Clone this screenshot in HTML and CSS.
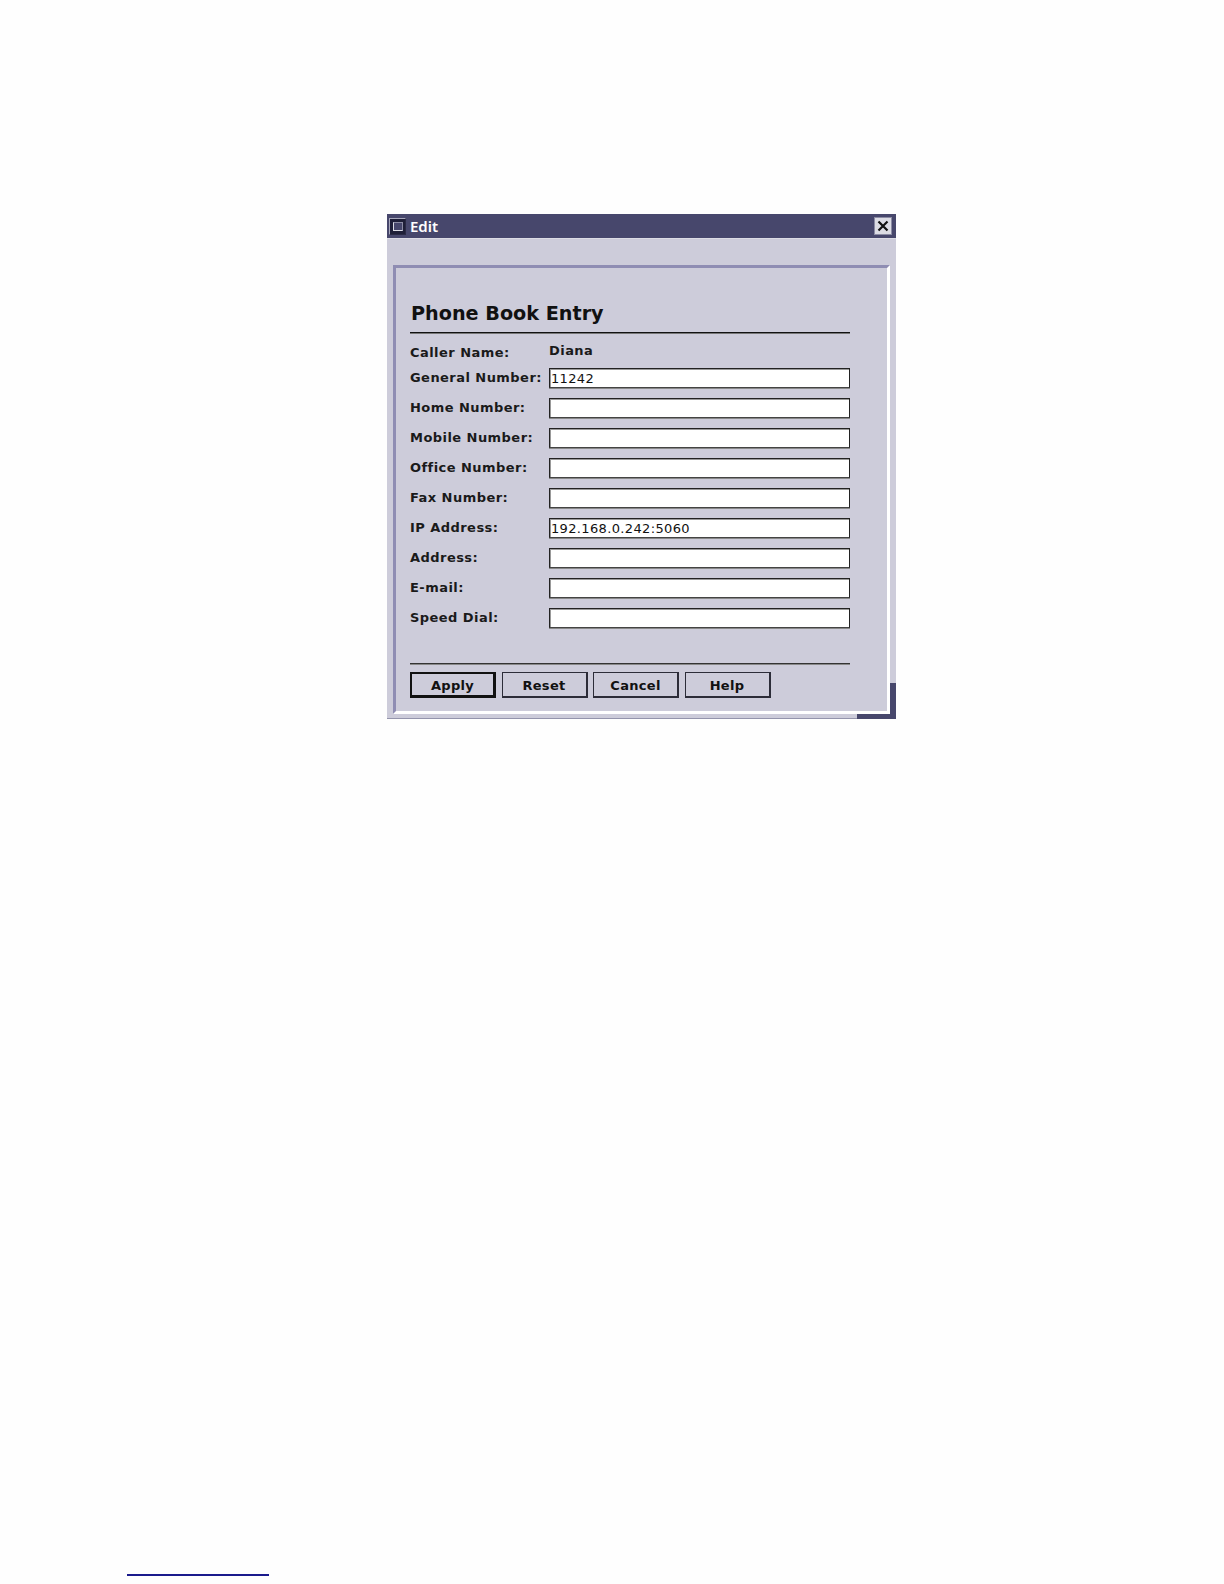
FILE: index.html
```html
<!DOCTYPE html>
<html lang="en">
<head>
    <meta charset="UTF-8">
    <title>Edit</title>
    <link rel="stylesheet" href="styles.css">
</head>
<body>
    <div class="window">
        <div class="title-bar">
            <span class="title-icon"><span></span></span>
            <span class="title-text">Edit</span>
            <span class="close-button">
                <svg width="12" height="12" viewBox="0 0 12 12"><path d="M1.5 1.5 L10.5 10.5 M10.5 1.5 L1.5 10.5" stroke="#111" stroke-width="2.2" fill="none"/></svg>
            </span>
        </div>

        <div class="panel">
            <h1>Phone Book Entry</h1>

            <div class="form-group caller">
                <label>Caller Name:</label>
                <span class="value">Diana</span>
            </div>
            <div class="form-group">
                <label>General Number:</label>
                <input type="text" value="11242">
            </div>
            <div class="form-group">
                <label>Home Number:</label>
                <input type="text">
            </div>
            <div class="form-group">
                <label>Mobile Number:</label>
                <input type="text">
            </div>
            <div class="form-group">
                <label>Office Number:</label>
                <input type="text">
            </div>
            <div class="form-group">
                <label>Fax Number:</label>
                <input type="text">
            </div>
            <div class="form-group">
                <label>IP Address:</label>
                <input type="text" value="192.168.0.242:5060">
            </div>
            <div class="form-group">
                <label>Address:</label>
                <input type="text">
            </div>
            <div class="form-group">
                <label>E-mail:</label>
                <input type="text">
            </div>
            <div class="form-group">
                <label>Speed Dial:</label>
                <input type="text">
            </div>

            <div class="button-row">
                <button type="button" class="default">Apply</button>
                <button type="button">Reset</button>
                <button type="button">Cancel</button>
                <button type="button">Help</button>
            </div>
        </div>
    </div>

    <hr class="footnote-rule">
</body>
</html>
```

FILE: styles.css
```css
/* General body styles */
body {
    margin: 0;
    background-color: #fefefe;
    font-family: "DejaVu Sans", Verdana, sans-serif;
    color: #111;
}

/* Window frame */
.window {
    position: relative;
    box-sizing: border-box;
    width: 509px;
    height: 505px;
    margin: 214px 0 0 387px;
    background-color: #cdccda;
    border-bottom: 1px solid #9494ac;
}

/* Resize corner of the frame */
.window::before,
.window::after {
    content: "";
    position: absolute;
    background-color: #47476c;
}

.window::before {
    right: 0;
    bottom: -1px;
    width: 6px;
    height: 36px;
}

.window::after {
    right: 0;
    bottom: -1px;
    width: 39px;
    height: 5px;
}

.title-bar {
    display: flex;
    align-items: center;
    height: 24px;
    padding: 0 4px 0 2px;
    background-color: #47476c;
    border-bottom: 1px solid #dcdce4;
}

.title-icon {
    display: flex;
    align-items: center;
    justify-content: center;
    box-sizing: border-box;
    width: 17px;
    height: 17px;
    background-color: #1f1f38;
    border: 1px solid #a8a8bc;
    border-right-color: #2a2a44;
    border-bottom-color: #2a2a44;
}

.title-icon span {
    display: block;
    box-sizing: border-box;
    width: 10px;
    height: 9px;
    background-color: #47476c;
    border: 1px solid #8c8ca4;
    border-left-color: #dcdce4;
    border-bottom-color: #dcdce4;
}

.title-text {
    margin-left: 4px;
    color: #fff;
    font-family: "Noto Sans", sans-serif;
    font-size: 15px;
    font-weight: 600;
}

.close-button {
    display: flex;
    align-items: center;
    justify-content: center;
    box-sizing: border-box;
    width: 18px;
    height: 18px;
    margin-left: auto;
    background-color: #dcdce4;
    border: 1px solid #8c8ca4;
}

/* Inner panel */
.panel {
    box-sizing: border-box;
    width: 497px;
    height: 449px;
    margin: 26px 0 0 6px;
    padding: 0 37px 0 14px;
    border-top: 3px solid #8f8db3;
    border-left: 3px solid #8f8db3;
    border-right: 3px solid #fff;
    border-bottom: 3px solid #fff;
}

h1 {
    margin: 0;
    padding: 34px 0 6px 1px;
    font-size: 19.2px;
    line-height: 24px;
    font-weight: bold;
    border-bottom: 1px solid #111;
    box-shadow: 0 1px 0 #777;
}

/* Form rows */
.form-group {
    display: grid;
    grid-template-columns: 139px 301px;
    align-items: center;
    height: 30px;
    font-size: 13px;
    font-weight: bold;
    letter-spacing: 0.45px;
    color: #1a1a1a;
}

.form-group label {
    margin-top: -2px;
}

.form-group.caller label {
    margin-top: 8px;
}

.form-group.caller .value {
    margin-top: 4px;
}

input[type="text"] {
    box-sizing: border-box;
    width: 301px;
    height: 20px;
    padding: 1px 1px 0;
    background-color: #fff;
    border: 1px solid #222;
    border-bottom-color: #444;
    border-radius: 0;
    outline: none;
    box-shadow: inset 0 1px 0 #999, inset 1px 0 0 #999, 0 1px 0 #888;
    font-family: "DejaVu Sans", sans-serif;
    font-size: 13px;
    letter-spacing: 0.35px;
    color: #111;
}

/* Button row */
.button-row {
    display: flex;
    gap: 5.5px;
    margin-top: 30px;
    padding-top: 7px;
    border-top: 1px solid #333;
    box-shadow: inset 0 1px 0 #888;
}

.button-row button {
    box-sizing: border-box;
    width: 86px;
    height: 26px;
    margin-top: 1px;
    padding: 1px 0 0;
    background-color: #cdccda;
    border: 2px solid #2c2c38;
    border-top-width: 1px;
    border-left-width: 1px;
    border-radius: 0;
    font-family: "DejaVu Sans", sans-serif;
    font-size: 13px;
    font-weight: bold;
    letter-spacing: 0.3px;
    color: #111;
}

.button-row button.default {
    border: 3px solid #111;
    border-top-width: 2px;
    border-left-width: 2px;
}

/* Footnote rule at the page bottom */
.footnote-rule {
    width: 142px;
    height: 2px;
    margin: 855px 0 0 127px;
    padding: 0;
    border: 0;
    background-color: #1a1a8c;
}
```
